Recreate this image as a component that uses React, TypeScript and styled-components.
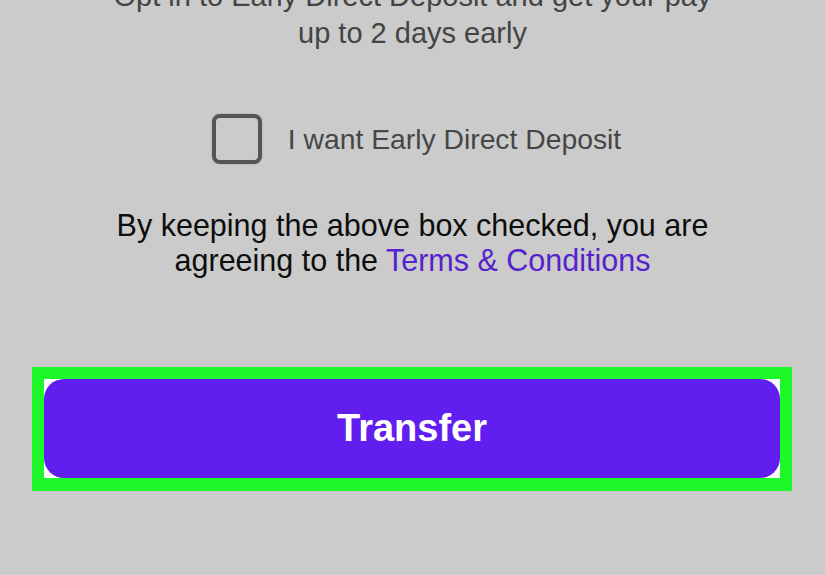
import React from 'react'
import styled, { createGlobalStyle } from 'styled-components'

const GlobalStyle = createGlobalStyle`
    html, body {
        margin: 0;
        padding: 0;
        background: #cbcbcb;
        overflow: hidden;
    }
    body {
        font-family: 'Liberation Sans', Arial, sans-serif;
    }
`

const Page = styled.div`
    width: 825px;
    height: 575px;
    display: flex;
    flex-direction: column;
    align-items: center;
    background: #cbcbcb;
`

const Intro = styled.p`
    margin: -22px 0 0;
    max-width: 610px;
    text-align: center;
    font-size: 29px;
    line-height: 37px;
    color: #444444;
`

const CheckRow = styled.label`
    margin-top: 62px;
    display: flex;
    align-items: center;
    gap: 26px;
    padding-left: 8px;
    cursor: pointer;
`

const Box = styled.span`
    width: 50px;
    height: 50px;
    box-sizing: border-box;
    border: 4px solid #555555;
    border-radius: 8px;
    box-shadow: 0 0 1px #555555;
`

const CheckText = styled.span`
    font-size: 28.3px;
    line-height: 36px;
    color: #464646;
`

const Agreement = styled.p`
    margin: 44px 0 0;
    max-width: 620px;
    text-align: center;
    font-size: 30.5px;
    line-height: 35px;
    color: #0d0d0d;
`

const Link = styled.a`
    color: #5522cc;
    text-decoration: none;
`

const Frame = styled.div`
    margin-top: 89px;
    align-self: stretch;
    margin-left: 32px;
    margin-right: 33px;
    border: 12px solid #1ef72a;
    border-bottom-width: 13px;
    background: #ffffff;
    display: flex;
`

const TransferButton = styled.button`
    flex: 1;
    height: 99px;
    border: none;
    border-radius: 20px;
    background: #601fee;
    color: #ffffff;
    font-family: 'Liberation Sans', Arial, sans-serif;
    font-weight: bold;
    font-size: 38px;
    cursor: pointer;
`

const App: React.FC = () => {
    return (
        <>
            <GlobalStyle />
            <Page>
                <Intro>
                    Opt in to Early Direct Deposit and get your pay up to 2
                    days early
                </Intro>
                <CheckRow>
                    <Box />
                    <CheckText>I want Early Direct Deposit</CheckText>
                </CheckRow>
                <Agreement>
                    By keeping the above box checked, you are agreeing to the{' '}
                    <Link href="#">Terms &amp; Conditions</Link>
                </Agreement>
                <Frame>
                    <TransferButton>Transfer</TransferButton>
                </Frame>
            </Page>
        </>
    )
}

export default App
